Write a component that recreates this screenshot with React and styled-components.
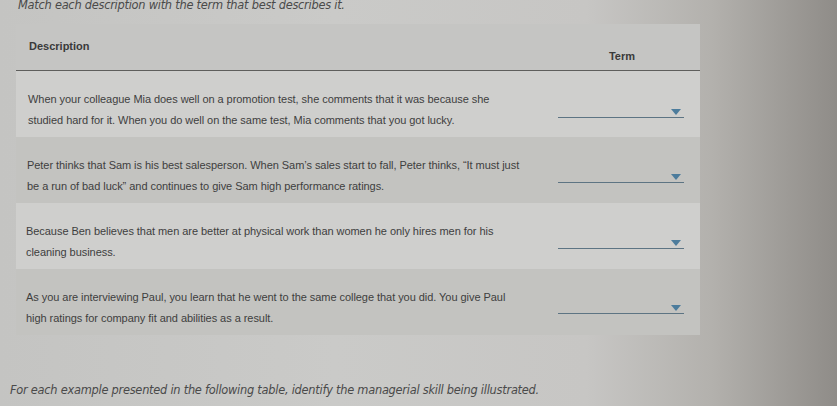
import React from 'react';
import styled, { createGlobalStyle } from 'styled-components';

const GlobalStyle = createGlobalStyle`
  html, body {
    margin: 0;
    padding: 0;
    height: 100%;
  }
  body {
    width: 837px;
    height: 406px;
    overflow: hidden;
    background: linear-gradient(
      to right,
      #c4c4c2 0%,
      #cacac8 40%,
      #c7c6c4 70%,
      #b3b1ad 85%,
      #8f8c88 100%
    );
  }
`;

const Page = styled.div`
  position: relative;
  height: 406px;
  display: flex;
  flex-direction: column;
`;

const Instruction = styled.p`
  margin: ${({ $top }) => $top} 0 0 ${({ $left }) => $left};
  font-family: 'DejaVu Sans', Verdana, sans-serif;
  font-style: italic;
  font-size: 11.4px;
  letter-spacing: -0.25px;
  line-height: 14px;
  color: #4a4a4a;
  white-space: nowrap;
`;

const Table = styled.div`
  margin: 12px 0 0 16px;
  width: 684px;
  font-family: 'Liberation Sans', Arial, sans-serif;
  color: #3c3c3c;
`;

const HeadRow = styled.div`
  display: grid;
  grid-template-columns: 540px 1fr;
  height: 46px;
  background: #c5c5c3;
  border-bottom: 1px solid #5e5e5c;
`;

const HeadCell = styled.div`
  font-size: 11px;
  font-weight: 600;
  color: #3a3a3a;
  padding: ${({ $pad }) => $pad};
  text-align: ${({ $align }) => $align || 'left'};
`;

const Row = styled.div`
  display: grid;
  grid-template-columns: 540px 1fr;
  height: 66px;
  background: ${({ $shade }) => ($shade ? '#c3c3c0' : '#cfcfcd')};
`;

const DescCell = styled.div`
  padding: 18px 0 0 ${({ $indent }) => $indent}px;
  font-size: 11px;
  line-height: 21px;
  letter-spacing: -0.05px;
  color: #3e3e3e;
  white-space: nowrap;
`;

const TermCell = styled.div`
  display: flex;
  align-items: flex-start;
  padding-top: ${({ $top }) => $top}px;
`;

const Select = styled.div`
  position: relative;
  margin-left: 2px;
  width: 126px;
  height: 8px;
  border-bottom: 1.5px solid #5d7483;
`;

const Caret = styled.span`
  position: absolute;
  right: 3px;
  top: 0;
  width: 0;
  height: 0;
  border-left: 5px solid transparent;
  border-right: 5px solid transparent;
  border-top: 6px solid #4c7c9c;
`;

const rows = [
  {
    text: [
      'When your colleague Mia does well on a promotion test, she comments that it was because she',
      'studied hard for it. When you do well on the same test, Mia comments that you got lucky.',
    ],
    indent: 12,
    top: 38,
  },
  {
    text: [
      'Peter thinks that Sam is his best salesperson. When Sam\u2019s sales start to fall, Peter thinks, \u201cIt must just',
      'be a run of bad luck\u201d and continues to give Sam high performance ratings.',
    ],
    indent: 11,
    top: 37,
  },
  {
    text: [
      'Because Ben believes that men are better at physical work than women he only hires men for his',
      'cleaning business.',
    ],
    indent: 10,
    top: 37,
  },
  {
    text: [
      'As you are interviewing Paul, you learn that he went to the same college that you did. You give Paul',
      'high ratings for company fit and abilities as a result.',
    ],
    indent: 10,
    top: 36,
  },
];

export default function App() {
  return (
    <>
      <GlobalStyle />
      <Page>
        <Instruction $top="-2px" $left="18px">
          Match each description with the term that best describes it.
        </Instruction>
        <Table>
          <HeadRow>
            <HeadCell $pad="16px 0 0 13px">Description</HeadCell>
            <HeadCell $pad="26px 12px 0 0" $align="center">
              Term
            </HeadCell>
          </HeadRow>
          {rows.map((r, i) => (
            <Row key={i} $shade={i % 2 === 1}>
              <DescCell $indent={r.indent}>
                {r.text[0]}
                <br />
                {r.text[1]}
              </DescCell>
              <TermCell $top={r.top}>
                <Select>
                  <Caret />
                </Select>
              </TermCell>
            </Row>
          ))}
        </Table>
        <Instruction $top="48px" $left="10px">
          For each example presented in the following table, identify the managerial skill being illustrated.
        </Instruction>
      </Page>
    </>
  );
}
